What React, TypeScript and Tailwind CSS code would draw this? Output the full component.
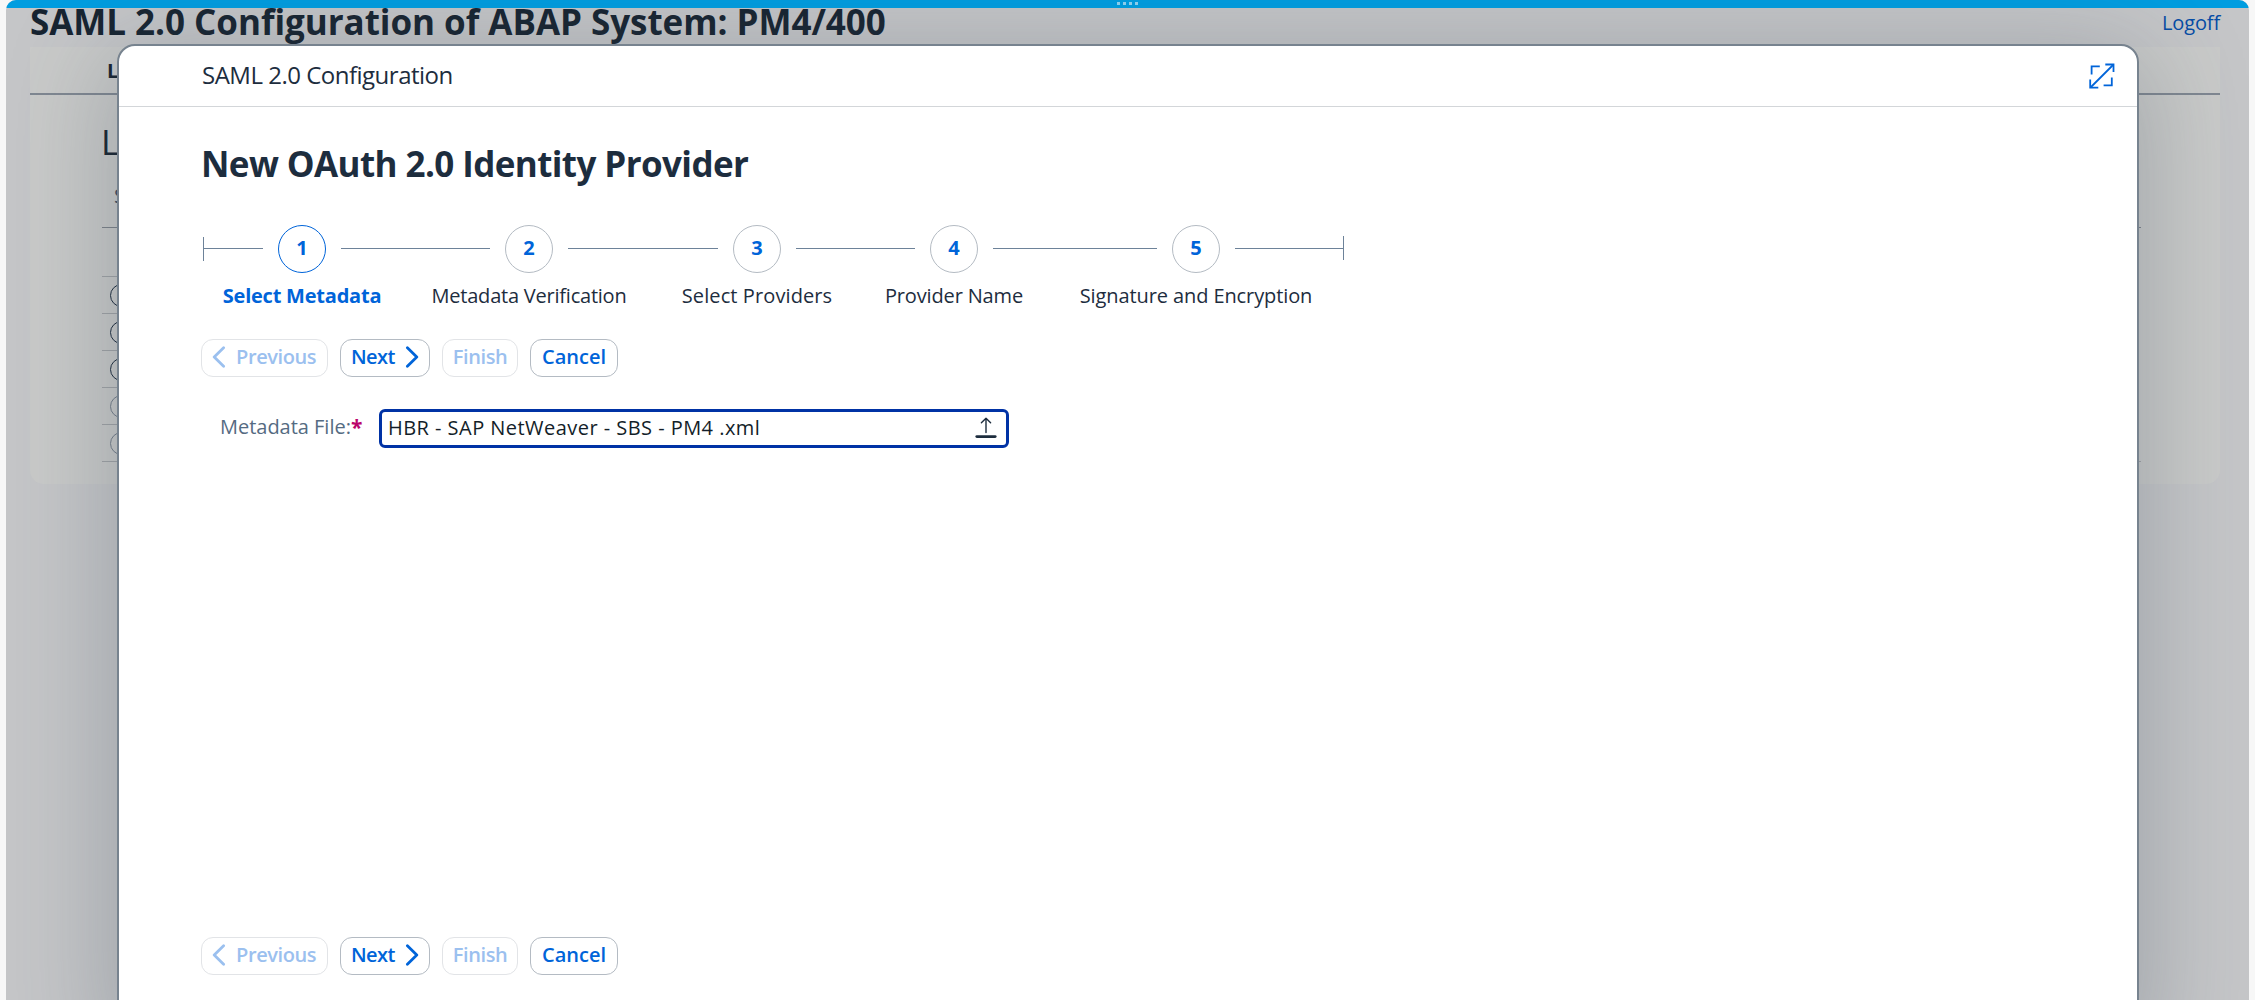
import { Fragment } from 'react';

function ChevronLeft() {
  return (
    <svg className="h-[22px] w-[14px]" viewBox="0 0 14 22" fill="none" stroke="currentColor" strokeWidth="2.8" strokeLinecap="round" strokeLinejoin="round">
      <path d="M11.6 1.8 2.2 11l9.4 9.2" />
    </svg>
  );
}

function ChevronRight() {
  return (
    <svg className="h-[22px] w-[14px]" viewBox="0 0 14 22" fill="none" stroke="currentColor" strokeWidth="2.8" strokeLinecap="round" strokeLinejoin="round">
      <path d="M2.4 1.8 11.8 11l-9.4 9.2" />
    </svg>
  );
}

function ExpandIcon() {
  return (
    <svg className="h-[26px] w-[26px]" viewBox="0 0 26 26" fill="none" stroke="currentColor" strokeWidth="1.8">
      <path d="M2 24 24 2" />
      <path d="M16.3 1.5H24.5V9" />
      <path d="M1.2 16.6V24.6H9.3" />
      <path d="M10.8 3.4H2.6V11.6" />
      <path d="M22.8 14.4V22.4H14.6" />
    </svg>
  );
}

function UploadIcon() {
  return (
    <svg className="h-[22px] w-[22px] text-[#1d2d3e]" viewBox="0 0 22 22" fill="none" stroke="currentColor" strokeLinecap="round" strokeLinejoin="round">
      <path strokeWidth="1.4" d="M11 15.5V1.2M6.4 5.8 11 1.2l4.6 4.6" />
      <path strokeWidth="2.8" d="M1.8 19.6H20.2" />
    </svg>
  );
}

const buttonBase = 'flex h-[38px] items-center rounded-[12px] border pb-[2px] text-[20px] leading-7 font-semibold';

function WizardButtons() {
  return (
    <div className="flex gap-3">
      <button className={`${buttonBase} w-[127px] gap-[10px] border-[#e2e4e7] pl-[10px] tracking-[-0.4px] text-[#9bc0ef]`}>
        <ChevronLeft />
        Previous
      </button>
      <button className={`${buttonBase} w-[90px] justify-between border-[#b4bbc3] pr-[10px] pl-[10px] tracking-[-0.6px] text-[#0064d9]`}>
        Next
        <ChevronRight />
      </button>
      <button className={`${buttonBase} w-[76px] justify-center border-[#e2e4e7] tracking-[-0.4px] text-[#9bc0ef]`}>
        Finish
      </button>
      <button className={`${buttonBase} w-[88px] justify-center border-[#b4bbc3] text-[#0064d9]`}>
        Cancel
      </button>
    </div>
  );
}

const steps = [
  { label: 'Select Metadata', tracking: 'tracking-[-0.22px]', line: 'w-[149px]' },
  { label: 'Metadata Verification', tracking: 'tracking-[-0.22px]', line: 'w-[150px]' },
  { label: 'Select Providers', tracking: 'tracking-[0.1px]', line: 'w-[119px]' },
  { label: 'Provider Name', tracking: 'tracking-[-0.15px]', line: 'w-[164px]' },
  { label: 'Signature and Encryption', tracking: 'tracking-[-0.1px]', line: 'w-[108px]' },
];

function Stepper() {
  return (
    <div className="mt-[41px] ml-[2px] flex h-[84px]">
      <div className="mt-[12px] h-[24px] w-px bg-[#6d8299]" />
      <div className="mt-[23px] h-px w-[59px] bg-[#6d8299]" />
      {steps.map((s, i) => (
        <Fragment key={s.label}>
          <div className="mx-[15px] flex w-[48px] flex-col items-center">
            <div
              className={`flex h-[48px] w-[48px] shrink-0 items-center justify-center rounded-full border pb-0.5 text-[20px] font-bold text-[#0064d9] ${
                i === 0 ? 'border-[#0064d9]' : 'border-[#b4bbc3]'
              }`}
            >
              {i + 1}
            </div>
            <div
              className={`mt-[9px] text-[20px] leading-7 whitespace-nowrap ${s.tracking} ${
                i === 0 ? 'font-bold text-[#0064d9]' : 'text-[#1d2d3e]'
              }`}
            >
              {s.label}
            </div>
          </div>
          <div className={`mt-[23px] h-px bg-[#6d8299] ${s.line}`} />
        </Fragment>
      ))}
      <div className="mt-[11px] h-[24px] w-px bg-[#6d8299]" />
    </div>
  );
}

function BackgroundPage() {
  return (
    <>
      <div className="flex h-[39px] items-start justify-between px-6">
        <h1 className="text-[35px] leading-[28px] font-bold tracking-[-0.04px] whitespace-nowrap text-[#172431]">
          SAML 2.0 Configuration of ABAP System: PM4/400
        </h1>
        <a className="mr-[5px] text-[20px] leading-[30px] tracking-[-0.15px] text-[#064da6]">Logoff</a>
      </div>
      <div className="mr-[29px] ml-6 h-[437px] rounded-b-[14px] bg-[#c9cac9] text-[#172431]">
        <div className="h-[48px] border-b-2 border-[#7f8791] pt-[8px] pl-[77px] text-[20px] leading-[31px] font-bold">
          L
        </div>
        <div className="h-[84px] pt-[29px] pl-[71px] text-[35px] leading-[36px]">L</div>
        <div className="mr-[79px] ml-[72px]">
          <div className="h-[49px] border-b border-[#7c8289] pt-[3px] pl-[12px] text-[20px] leading-[28px] text-[#3c4d60]">
            S
          </div>
          <div className="h-[49px] w-[100px] border-b border-[#a0a3a6]" />
          {[0, 1, 2, 3, 4].map((i) => (
            <div
              key={i}
              className={`flex h-[37px] items-center border-b border-[#a0a3a6] pl-[8px] ${i === 4 ? '' : 'w-[100px]'}`}
            >
              <div className={`h-[23px] w-[23px] rounded-full border ${i < 3 ? 'border-[#1c2c3e]' : 'border-[#747e8a]'}`} />
            </div>
          ))}
        </div>
      </div>
    </>
  );
}

export default function App() {
  return (
    <div className="h-[1000px] w-[2255px] overflow-hidden bg-[#f7f7f7] px-[6px] font-['Open_Sans',sans-serif]">
      <div className="relative h-[1000px] w-[2243px] overflow-hidden rounded-t-[10px] bg-[#c5c6c8]">
        <div className="flex h-2 items-start justify-center gap-[3px] bg-[#009de0] pt-[2px]">
          {[0, 1, 2, 3].map((i) => (
            <span key={i} className="h-[3px] w-[3px] bg-[#8fd3f2]" />
          ))}
        </div>
        <BackgroundPage />
        <div className="absolute top-[44px] left-[111px] flex h-[1000px] w-[2022px] flex-col rounded-[18px] border-2 border-[#77838f] bg-white shadow-[0_16px_100px_10px_rgba(60,75,90,0.28)]">
          <div className="flex h-[61px] shrink-0 items-center justify-between border-b border-[#d3d6d9] pr-[22px] pb-[2px] pl-[83px]">
            <h2 className="text-[24px] leading-8 tracking-[-0.5px] text-[#1d2d3e]">SAML 2.0 Configuration</h2>
            <span className="mt-[2px] text-[#0064d9]">
              <ExpandIcon />
            </span>
          </div>
          <div className="flex flex-col pt-[37px] pl-[82px]">
            <h3 className="text-[35px] leading-10 font-bold tracking-[-0.6px] text-[#1d2d3e]">
              New OAuth 2.0 Identity Provider
            </h3>
            <Stepper />
            <div className="mt-[30px]">
              <WizardButtons />
            </div>
            <div className="mt-8 flex h-[39px] items-center">
              <label className="ml-[19px] flex w-[159px] pb-[3px] text-[20px] leading-7 tracking-[-0.02px] whitespace-nowrap text-[#556b82]">
                Metadata File:
                <span className="text-[21px] leading-7 font-bold text-[#ba066c]">*</span>
              </label>
              <div className="flex h-[39px] w-[630px] items-center justify-between rounded-[6px] border-[3px] border-[#0032a5] bg-white pr-[9px] pb-px pl-[6px] text-[20px] tracking-[0.46px] text-[#131e29]">
                HBR - SAP NetWeaver - SBS - PM4 .xml
                <UploadIcon />
              </div>
            </div>
            <div className="mt-[489px]">
              <WizardButtons />
            </div>
          </div>
        </div>
      </div>
    </div>
  );
}
